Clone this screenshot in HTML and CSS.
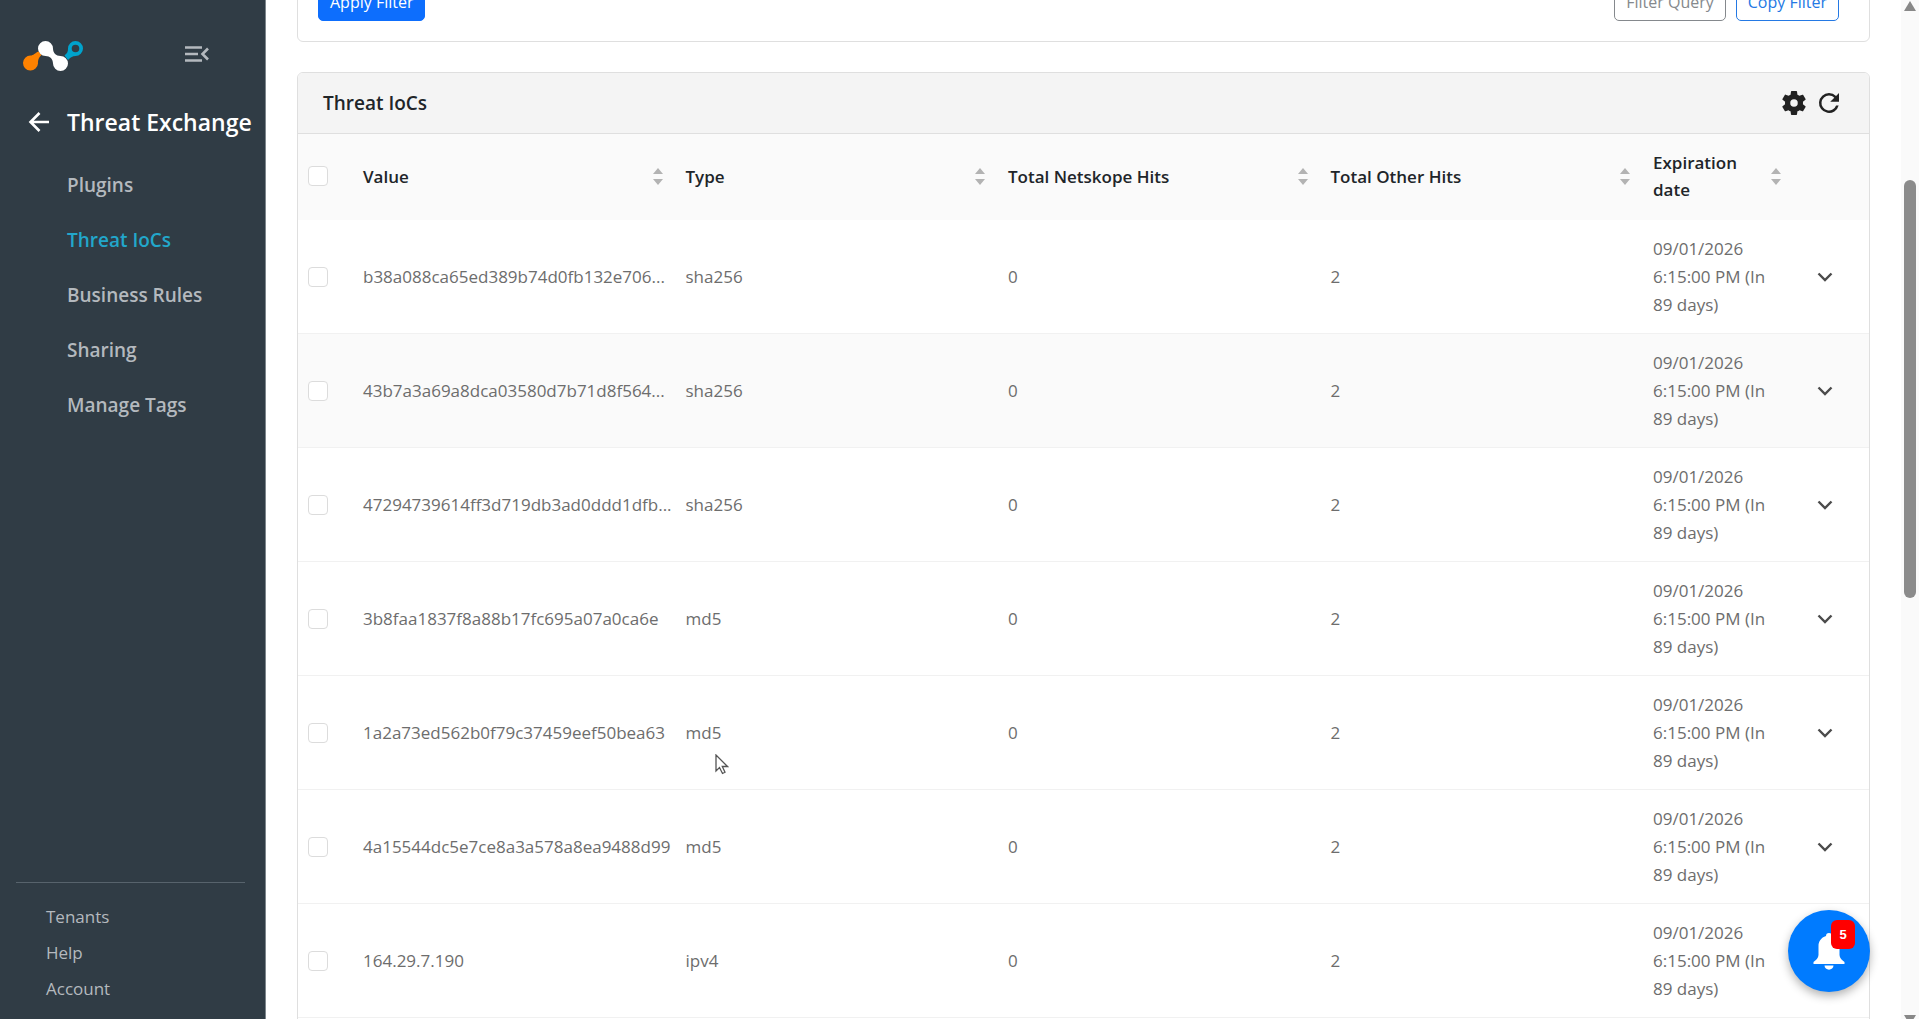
FILE: index.html
```
<!DOCTYPE html>
<html lang="en">

<head>

    <meta charset="utf-8">
    <meta name="viewport" content="width=device-width, initial-scale=1">

    <title>Threat IoCs</title>

    <link rel="stylesheet" href="styles.css">

</head>

<body>

    <!-- shared icons -->
    <svg class="sprite" aria-hidden="true">
        <symbol id="sort" viewBox="0 0 10 17">
            <path d="M5 0L10 6H0zM5 17L0 11H10z" />
        </symbol>
        <symbol id="chevron" viewBox="0 0 16 10">
            <path d="M1.5 1.5L8 8L14.5 1.5" fill="none" stroke="currentColor" stroke-width="2.4" />
        </symbol>
    </svg>

    <aside class="sidebar">
        <div class="brand">
            <svg class="logo" viewBox="0 0 60 30" role="img" aria-label="Logo">
                <path fill="#ff8200" d="M7.5 14.5C10.5 14.5 12 12 15.500 10.500L18.500 14C15.500 17 15 19 15 22.500A7.500 7.500 0 1 1 7.500 14.500z" />
                <path fill="#00a3cd" fill-rule="evenodd" d="M41.500 14.500C44.500 12 45 10.500 45 7.500A7.500 7.500 0 1 1 52.500 15C49.500 15 48 16 45 19zM52.500 3.700A3.800 3.800 0 1 0 52.500 11.300A3.800 3.800 0 1 0 52.500 3.700z" />
                <path fill="#fff" d="M22.500 0A7.500 7.500 0 0 1 30 7.500C30 12 33 15 37.500 15A7.500 7.500 0 1 1 30 22.500C30 18 27 15 22.500 15A7.500 7.500 0 1 1 22.500 0z" />
            </svg>
            <button class="icon-button collapse" type="button" aria-label="Collapse menu">
                <svg width="24" height="16" viewBox="0 0 24 16" fill="none" stroke="currentColor" stroke-width="2.600">
                    <path d="M0 1.500H17M0 8H13M0 14.500H17M23 2.500L17.500 8L23 13.500" />
                </svg>
            </button>
        </div>

        <div class="section">
            <button class="icon-button" type="button" aria-label="Back">
                <svg width="22" height="20" viewBox="0 0 22 20" fill="none" stroke="currentColor" stroke-width="2.600">
                    <path d="M21 10H2.500M11.500 1L2.500 10L11.500 19" />
                </svg>
            </button>
            <h2>Threat Exchange</h2>
        </div>

        <nav class="menu">
            <a href="#">Plugins</a>
            <a href="#" class="active">Threat IoCs</a>
            <a href="#">Business Rules</a>
            <a href="#">Sharing</a>
            <a href="#">Manage Tags</a>
        </nav>

        <nav class="bottom-menu">
            <a href="#">Tenants</a>
            <a href="#">Help</a>
            <a href="#">Account</a>
        </nav>
    </aside>

    <main class="content">
        <div class="card filters">
            <button type="button" class="button primary">Apply Filter</button>
            <div class="filter-actions">
                <button type="button" class="button muted">Filter Query</button>
                <button type="button" class="button outline">Copy Filter</button>
            </div>
        </div>

        <div class="card">
            <div class="card-header">
                <h1>Threat IoCs</h1>
                <div class="tools">
                    <button class="icon-button" type="button" aria-label="Settings">
                        <svg width="30" height="30" viewBox="0 0 24 24" fill="currentColor">
                            <path d="M19.140 12.940c.040-.300.060-.610.060-.940s-.020-.640-.070-.940l2.030-1.580c.180-.140.230-.410.120-.610l-1.920-3.320c-.120-.220-.370-.290-.590-.220l-2.390.960c-.500-.380-1.030-.700-1.620-.940l-.360-2.540c-.040-.240-.240-.410-.480-.410h-3.840c-.240 0-.430.170-.470.410l-.360 2.540c-.590.240-1.130.570-1.620.940l-2.390-.960c-.220-.080-.470 0-.590.220L2.740 8.870c-.120.210-.080.470.120.610l2.030 1.580c-.050.300-.090.630-.090.940s.020.640.070.940l-2.030 1.580c-.180.140-.230.410-.120.610l1.920 3.320c.120.220.370.290.590.220l2.390-.960c.500.380 1.030.700 1.620.940l.360 2.540c.050.240.240.410.480.410h3.840c.240 0 .440-.170.470-.410l.360-2.540c.590-.240 1.130-.560 1.620-.940l2.390.960c.220.080.470 0 .590-.220l1.920-3.320c.120-.220.070-.470-.120-.610zM12 15a3 3 0 1 1 0-6 3 3 0 0 1 0 6z" />
                        </svg>
                    </button>
                    <button class="icon-button" type="button" aria-label="Refresh">
                        <svg width="30" height="30" viewBox="0 0 24 24" fill="currentColor">
                            <path d="M17.650 6.350A7.960 7.960 0 0 0 12 4a8 8 0 1 0 7.730 10h-2.080A6 6 0 1 1 12 6c1.660 0 3.140.690 4.220 1.780L13 11h7V4z" />
                        </svg>
                    </button>
                </div>
            </div>

            <table class="iocs">
                <colgroup>
                    <col class="col-check">
                    <col>
                    <col>
                    <col>
                    <col>
                    <col class="col-date">
                    <col class="col-expand">
                </colgroup>
                <thead>
                    <tr>
                        <th><input type="checkbox" aria-label="Select all"></th>
                        <th><div class="sortable">Value <svg><use href="#sort" /></svg></div></th>
                        <th><div class="sortable">Type <svg><use href="#sort" /></svg></div></th>
                        <th><div class="sortable">Total Netskope Hits <svg><use href="#sort" /></svg></div></th>
                        <th><div class="sortable">Total Other Hits <svg><use href="#sort" /></svg></div></th>
                        <th><div class="sortable">Expiration date <svg><use href="#sort" /></svg></div></th>
                        <th></th>
                    </tr>
                </thead>
                <tbody>
                    <tr>
                        <td><input type="checkbox" aria-label="Select row"></td>
                        <td class="value">b38a088ca65ed389b74d0fb132e706...</td>
                        <td>sha256</td>
                        <td>0</td>
                        <td>2</td>
                        <td>09/01/2026 6:15:00 PM (In 89 days)</td>
                        <td><button class="icon-button" type="button" aria-label="Expand"><svg class="chevron"><use href="#chevron" /></svg></button></td>
                    </tr>
                    <tr class="hovered">
                        <td><input type="checkbox" aria-label="Select row"></td>
                        <td class="value">43b7a3a69a8dca03580d7b71d8f564...</td>
                        <td>sha256</td>
                        <td>0</td>
                        <td>2</td>
                        <td>09/01/2026 6:15:00 PM (In 89 days)</td>
                        <td><button class="icon-button" type="button" aria-label="Expand"><svg class="chevron"><use href="#chevron" /></svg></button></td>
                    </tr>
                    <tr>
                        <td><input type="checkbox" aria-label="Select row"></td>
                        <td class="value">47294739614ff3d719db3ad0ddd1dfb...</td>
                        <td>sha256</td>
                        <td>0</td>
                        <td>2</td>
                        <td>09/01/2026 6:15:00 PM (In 89 days)</td>
                        <td><button class="icon-button" type="button" aria-label="Expand"><svg class="chevron"><use href="#chevron" /></svg></button></td>
                    </tr>
                    <tr>
                        <td><input type="checkbox" aria-label="Select row"></td>
                        <td class="value">3b8faa1837f8a88b17fc695a07a0ca6e</td>
                        <td>md5</td>
                        <td>0</td>
                        <td>2</td>
                        <td>09/01/2026 6:15:00 PM (In 89 days)</td>
                        <td><button class="icon-button" type="button" aria-label="Expand"><svg class="chevron"><use href="#chevron" /></svg></button></td>
                    </tr>
                    <tr>
                        <td><input type="checkbox" aria-label="Select row"></td>
                        <td class="value">1a2a73ed562b0f79c37459eef50bea63</td>
                        <td>md5</td>
                        <td>0</td>
                        <td>2</td>
                        <td>09/01/2026 6:15:00 PM (In 89 days)</td>
                        <td><button class="icon-button" type="button" aria-label="Expand"><svg class="chevron"><use href="#chevron" /></svg></button></td>
                    </tr>
                    <tr>
                        <td><input type="checkbox" aria-label="Select row"></td>
                        <td class="value">4a15544dc5e7ce8a3a578a8ea9488d99</td>
                        <td>md5</td>
                        <td>0</td>
                        <td>2</td>
                        <td>09/01/2026 6:15:00 PM (In 89 days)</td>
                        <td><button class="icon-button" type="button" aria-label="Expand"><svg class="chevron"><use href="#chevron" /></svg></button></td>
                    </tr>
                    <tr>
                        <td><input type="checkbox" aria-label="Select row"></td>
                        <td class="value">164.29.7.190</td>
                        <td>ipv4</td>
                        <td>0</td>
                        <td>2</td>
                        <td>09/01/2026 6:15:00 PM (In 89 days)</td>
                        <td><button class="icon-button" type="button" aria-label="Expand"><svg class="chevron"><use href="#chevron" /></svg></button></td>
                    </tr>
                </tbody>
            </table>
            <div class="card-end"></div>
        </div>
    </main>

    <div class="scrollbar" aria-hidden="true">
        <svg width="12" height="10" viewBox="0 0 12 10"><path d="M6 0L12 10H0z" /></svg>
        <div class="track">
            <div class="thumb"></div>
        </div>
        <svg width="12" height="10" viewBox="0 0 12 10"><path d="M0 0H12L6 10z" /></svg>
    </div>

    <button class="notifications" type="button" aria-label="Notifications">
        <svg width="32" height="37" viewBox="0 0 32 37" fill="#fff">
            <path d="M16 0C18 0 19 1 19 3C24 4.500 26.500 8.500 26.500 13V22C26.500 25 29 27 31.500 29V31H.500V29C3 27 5.500 25 5.500 22V13C5.500 8.500 8 4.500 13 3C13 1 14 0 16 0zM11.500 32.500H20.500C20.500 38 11.500 38 11.500 32.500z" />
        </svg>
        <span class="badge">5</span>
    </button>

    <svg class="cursor" viewBox="0 0 14 21" aria-hidden="true">
        <path d="M1 1V17L4.500 13.500L7.500 19.500L10 18.300L7.300 12.500H12.500z" fill="#fff" stroke="#555" stroke-width="1.300" />
    </svg>

</body>

</html>
```
FILE: styles.css
```
* {
    box-sizing: border-box;
}

html,
body {
    margin: 0px;
    height: 100%;
    overflow: hidden;
}

body {
    display: flex;
    background-color: #fff;
    color: #212529;
    font-family: "Open Sans", "Noto Sans", sans-serif;
    font-size: 17px;
    line-height: 28px;
}

h1,
h2 {
    margin: 0px;
    font-weight: 600;
}

a {
    color: inherit;
    text-decoration: none;
}

.sprite {
    display: none;
}

.icon-button {
    display: flex;
    padding: 0px;
    border: 0;
    background: none;
    color: inherit;
    cursor: pointer;
}

/* sidebar */

.sidebar {
    display: flex;
    flex-direction: column;
    flex: none;
    width: 266px;
    height: 100%;
    padding: 40px 0px 16px;
    background-color: #303c45;
    border-right: 1px solid #7d868c;
    color: #b4b9be;
}

.brand {
    display: flex;
    justify-content: space-between;
    padding: 0px 56px 0px 23px;
}

.logo {
    width: 60px;
    height: 32px;
}

.collapse {
    height: 28px;
    align-items: center;
}

.section {
    display: flex;
    align-items: center;
    gap: 17px;
    padding: 36px 0px 35px 28px;
    color: #fff;
    white-space: nowrap;
}

.section h2 {
    font-size: 23px;
}

.menu {
    display: flex;
    flex-direction: column;
    gap: 27px;
    padding-left: 67px;
    font-size: 19px;
    font-weight: 600;
}

.menu .active {
    color: #22a7cb;
}

.bottom-menu {
    display: flex;
    flex-direction: column;
    gap: 8px;
    margin: auto 20px 0px 16px;
    padding: 20px 0px 0px 30px;
    border-top: 1px solid #57636c;
}

/* content */

.content {
    flex: 1;
    min-width: 0;
    height: 100%;
    padding: 0px 31px;
    overflow: hidden;
}

.card {
    border: 1px solid #dfdfdf;
    border-radius: 6px;
}

.filters {
    display: flex;
    justify-content: space-between;
    margin-top: -39px;
    margin-bottom: 30px;
    padding: 20px 30px 20px 20px;
}

.filter-actions {
    display: flex;
    gap: 10px;
}

.button {
    height: 39px;
    padding: 0px 11px;
    border: 1px solid;
    border-radius: 5px;
    background-color: #fff;
    font-family: inherit;
    font-size: 16px;
    cursor: pointer;
}

.primary {
    background-color: #0d6efd;
    border-color: #0d6efd;
    color: #fff;
}

.muted {
    color: #85898d;
}

.outline {
    color: #2479e4;
}

.card-header {
    display: flex;
    justify-content: space-between;
    align-items: center;
    height: 61px;
    padding: 0px 25px;
    background-color: #f4f4f4;
    border-bottom: 1px solid #dfdfdf;
    border-radius: 5px 5px 0px 0px;
}

.card-header h1 {
    font-size: 19px;
}

.tools {
    display: flex;
    gap: 5px;
    color: #212121;
}

/* table */

.iocs {
    width: 100%;
    table-layout: fixed;
    border-collapse: separate;
    border-spacing: 0px;
}

.col-check {
    width: 55px;
}

.col-date {
    width: 151px;
}

.col-expand {
    width: 75px;
}

.iocs th,
.iocs td {
    padding: 0px 10px;
    text-align: left;
}

.iocs th {
    height: 86px;
    padding-bottom: 2px;
    background-color: #fafafa;
    font-weight: 600;
    line-height: 27px;
}

.iocs td {
    height: 114px;
    border-bottom: 1px solid #f1f1f1;
    color: #6d6d6d;
}

.iocs .hovered td {
    background-color: #fafafa;
}

.iocs .value {
    white-space: nowrap;
}

.sortable {
    display: flex;
    justify-content: space-between;
    align-items: center;
}

.sortable svg {
    flex: none;
    width: 10px;
    height: 17px;
    margin-right: 3px;
    fill: #b3b3b3;
}

.chevron {
    width: 16px;
    height: 10px;
    color: #4b4b4b;
}

.iocs .icon-button {
    margin-left: 13px;
}

.iocs input {
    display: block;
    appearance: none;
    width: 20px;
    height: 20px;
    margin: 0px;
    border: 1px solid #dcdcdc;
    border-radius: 4px;
    background-color: #fff;
}

.card-end {
    height: 60px;
}

/* scrollbar strip */

.scrollbar {
    display: flex;
    flex-direction: column;
    align-items: center;
    flex: none;
    width: 18px;
    height: calc(100% + 6px);
    padding-top: 1px;
    background-color: #fafafa;
    fill: #888;
}

.scrollbar svg {
    flex: none;
}

.track {
    flex: 1;
    padding-top: 169px;
}

.thumb {
    width: 12px;
    height: 50%;
    border-radius: 6px;
    background-color: #8b8b8b;
}

/* floating things */

.notifications {
    position: absolute;
    right: 49px;
    bottom: 27px;
    display: flex;
    justify-content: center;
    align-items: center;
    width: 82px;
    height: 82px;
    padding: 0px;
    border: 0;
    border-radius: 50%;
    background-color: #007bff;
    box-shadow: 0px 4px 10px rgba(0, 0, 0, 0.3);
    cursor: pointer;
}

.badge {
    position: absolute;
    top: 10px;
    right: 15px;
    width: 24px;
    border-radius: 6px;
    background-color: #f00;
    color: #fff;
    font-size: 13px;
    font-weight: 700;
    line-height: 29px;
    text-align: center;
}

.cursor {
    position: absolute;
    left: 715px;
    top: 754px;
    width: 14px;
    height: 21px;
}
```
